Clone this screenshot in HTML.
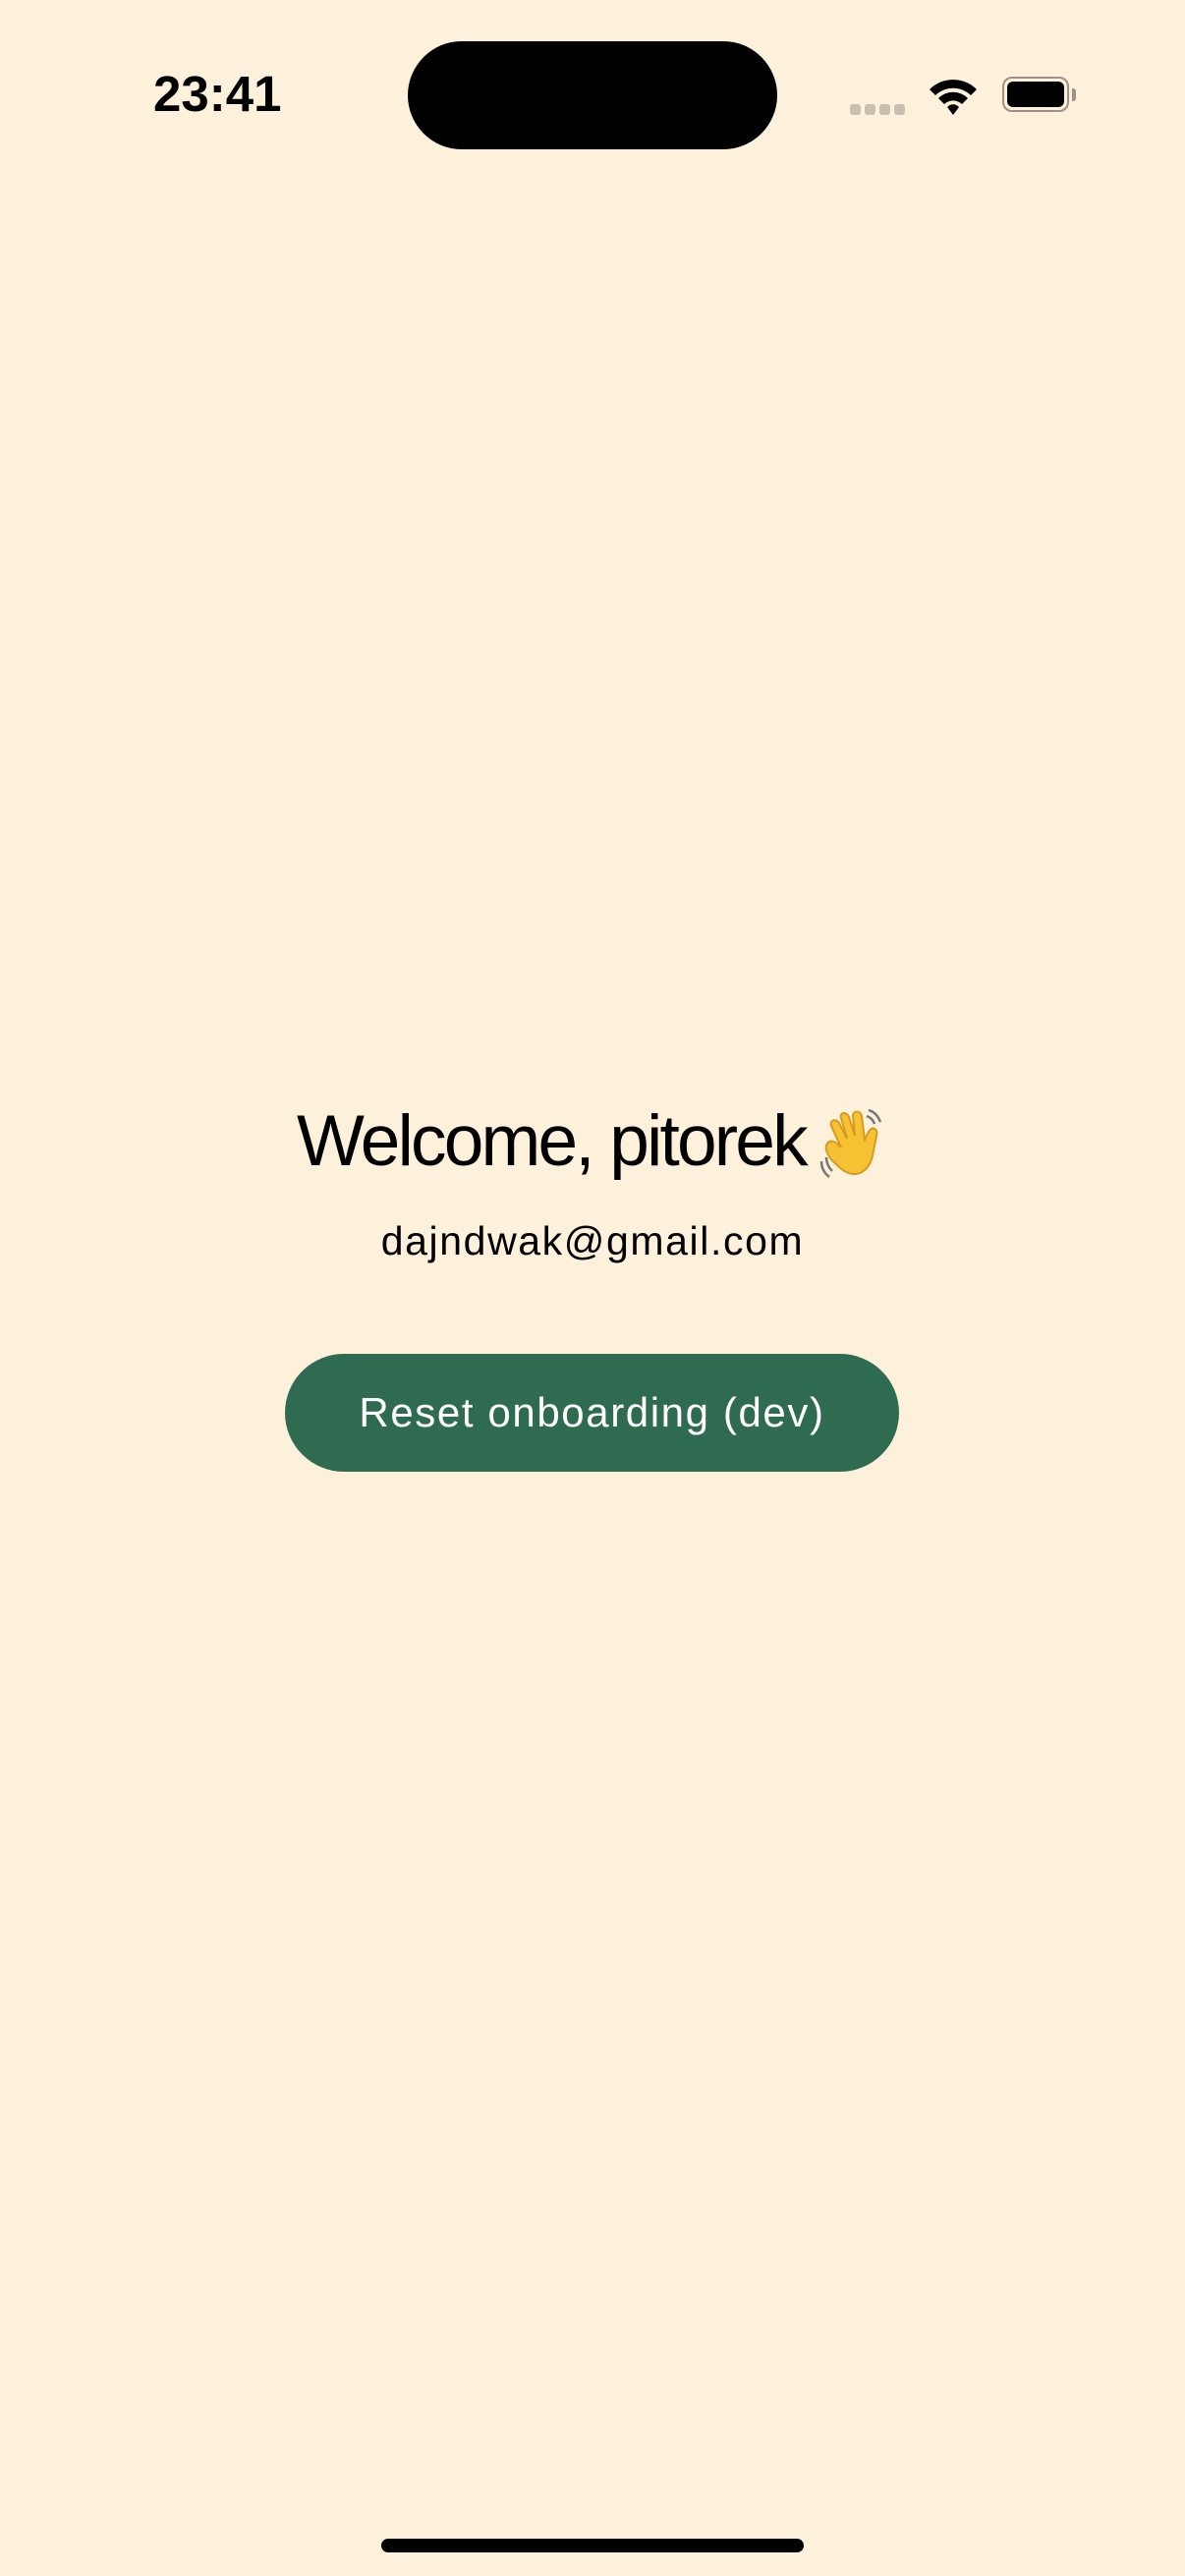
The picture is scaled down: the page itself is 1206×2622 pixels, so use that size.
<!DOCTYPE html>
<html><head><meta charset="utf-8"><style>
html,body{margin:0;padding:0}
body{width:1206px;height:2622px;background:#fdf1dc;position:relative;overflow:hidden;font-family:"Liberation Sans",sans-serif;color:#000}
.a{position:absolute}
</style></head><body>
<div class="a" style="left:156px;top:66px;font-size:51px;font-weight:bold;letter-spacing:0px">23:41</div>
<div class="a" style="left:415px;top:42px;width:376px;height:110px;background:#000;border-radius:55px"></div>
<div class="a" style="left:865px;top:106px;width:11px;height:11px;border-radius:3px;background:#c9c0b0"></div>
<div class="a" style="left:880px;top:106px;width:11px;height:11px;border-radius:3px;background:#c9c0b0"></div>
<div class="a" style="left:895px;top:106px;width:11px;height:11px;border-radius:3px;background:#c9c0b0"></div>
<div class="a" style="left:910px;top:106px;width:11px;height:11px;border-radius:3px;background:#c9c0b0"></div>
<svg class="a" style="left:943px;top:76px" width="54" height="42" viewBox="0 0 54 42">
<path d="M3 15 A34 34 0 0 1 51 15 L45 21 A26 26 0 0 0 9 21Z" fill="#000"/>
<path d="M12 24 A21 21 0 0 1 42 24 L36 30 A13 13 0 0 0 18 30Z" fill="#000"/>
<path d="M21 33 A8 8 0 0 1 33 33 L27 41Z" fill="#000"/>
</svg>
<div class="a" style="left:1020px;top:78px;width:68px;height:36px;border:2px solid #9c9184;border-radius:10px;box-sizing:border-box"></div>
<div class="a" style="left:1025px;top:83px;width:58px;height:26px;background:#000;border-radius:6px"></div>
<div class="a" style="left:1091px;top:90px;width:4px;height:13px;background:#9c9184;border-radius:0 3px 3px 0"></div>
<div class="a" style="left:302px;top:1120px;font-size:73px;white-space:nowrap;letter-spacing:-2.8px">Welcome, pitorek</div>
<svg class="a" style="left:832px;top:1126px" width="75" height="80" viewBox="0 0 75 80">
<path d="M20 60 C8 50 6 40 12 36 C16 34 20 38 24 42 L14 20 C12 14 19 12 22 17 L30 33 L24 12 C22 6 30 5 32 11 L38 30 L36 10 C36 4 44 4 45 10 L48 34 L52 26 C55 20 62 22 60 30 L56 50 C53 66 38 78 20 60Z" fill="#f6c234" stroke="#d89a1e" stroke-width="2"/>
<path d="M4 56 Q4 66 12 72 M9 52 Q9 60 15 66" stroke="#777" stroke-width="2.5" fill="none"/>
<path d="M52 4 Q60 6 64 16 M50 10 Q56 12 58 18" stroke="#777" stroke-width="2.5" fill="none"/>
</svg>
<div class="a" style="left:0;width:1206px;top:1240px;text-align:center;font-size:41px;letter-spacing:1.6px">dajndwak@gmail.com</div>
<div class="a" style="left:290px;top:1378px;width:625px;height:120px;background:#2f6b50;border-radius:60px;color:#fff;text-align:center;line-height:120px;font-size:42px;letter-spacing:1.6px">Reset onboarding (dev)</div>
<div class="a" style="left:388px;top:2584px;width:430px;height:14px;background:#000;border-radius:7px"></div>
</body></html>
